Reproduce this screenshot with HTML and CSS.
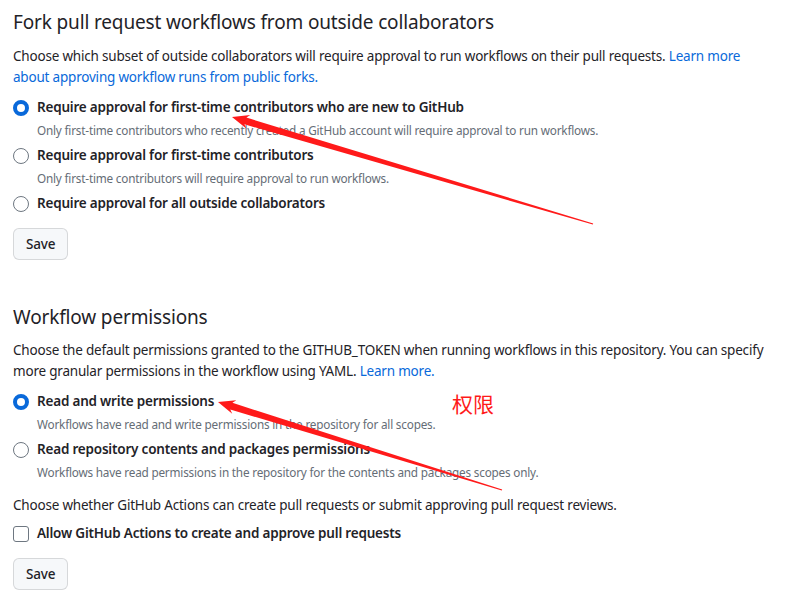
FILE: index.html
```html
<!DOCTYPE html>
<html lang="en">
<head>
<meta charset="utf-8">
<title>Actions settings</title>
<link rel="stylesheet" href="styles.css">
</head>
<body>
<main class="page">
  <section class="section">
    <h2 class="section-title">Fork pull request workflows from outside collaborators</h2>
    <p class="lead">Choose which subset of outside collaborators will require approval to run workflows on their pull requests. <a class="link" href="#">Learn more about approving workflow runs from public forks.</a></p>
    <div class="options">
      <label class="option">
        <span class="radio checked"></span>
        <span class="option-body">
          <span class="option-label">Require approval for first-time contributors who are new to GitHub</span>
          <span class="option-note">Only first-time contributors who recently created a GitHub account will require approval to run workflows.</span>
        </span>
      </label>
      <label class="option">
        <span class="radio"></span>
        <span class="option-body">
          <span class="option-label">Require approval for first-time contributors</span>
          <span class="option-note">Only first-time contributors will require approval to run workflows.</span>
        </span>
      </label>
      <label class="option">
        <span class="radio"></span>
        <span class="option-body">
          <span class="option-label">Require approval for all outside collaborators</span>
        </span>
      </label>
    </div>
    <button class="btn" type="button">Save</button>
  </section>

  <section class="section second">
    <h2 class="section-title">Workflow permissions</h2>
    <p class="lead">Choose the default permissions granted to the GITHUB_TOKEN when running workflows in this repository. You can specify more granular permissions in the workflow using YAML. <a class="link" href="#">Learn more.</a></p>
    <div class="options">
      <label class="option">
        <span class="radio checked"></span>
        <span class="option-body">
          <span class="option-label">Read and write permissions</span>
          <span class="option-note">Workflows have read and write permissions in the repository for all scopes.</span>
        </span>
      </label>
      <label class="option">
        <span class="radio"></span>
        <span class="option-body">
          <span class="option-label">Read repository contents and packages permissions</span>
          <span class="option-note">Workflows have read permissions in the repository for the contents and packages scopes only.</span>
        </span>
      </label>
    </div>
    <p class="lead plain">Choose whether GitHub Actions can create pull requests or submit approving pull request reviews.</p>
    <label class="option check-option">
      <span class="checkbox"></span>
      <span class="option-label">Allow GitHub Actions to create and approve pull requests</span>
    </label>
    <button class="btn" type="button">Save</button>
  </section>
</main>

<svg class="annotations" width="788" height="595" viewBox="0 0 788 595" aria-hidden="true">
  <polygon fill="#ff1a1a" points="232,117 250.3,115.1 246.4,117.6 593.2,223.4 592.8,224.6 244.4,124.3 246.3,128.5"/>
  <polygon fill="#ff1a1a" points="218,402 236.3,400.3 232.4,402.8 502.2,489.4 501.8,490.6 230.3,409.5 232.2,413.7"/>
</svg>
<span class="note-zh">权限</span>
</body>
</html>
```
FILE: styles.css
```css
html, body {
  margin: 0;
  padding: 0;
  background: #ffffff;
}

body {
  font-family: "Noto Sans", "Liberation Sans", sans-serif;
  color: #1f2328;
  font-size: 13.5px;
  letter-spacing: -0.2px;
  line-height: 21px;
}

.page {
  width: 762px;
  padding: 7px 13px 0;
}

.section-title {
  margin: 0;
  font-size: 19px;
  letter-spacing: -0.15px;
  line-height: 30px;
  font-weight: 400;
  color: #1f2328;
}

.second {
  margin-top: 42px;
}

.lead {
  margin: 9px 0 0;
}

.second .lead {
  margin-top: 8px;
}

.second .lead.plain {
  margin-top: 14px;
}

.link {
  color: #0969da;
  text-decoration: none;
}

.options {
  display: flex;
  flex-direction: column;
  gap: 6px;
  margin-top: 9px;
}

.option {
  display: flex;
  align-items: flex-start;
  gap: 8px;
}

.option-body {
  display: flex;
  flex-direction: column;
}

.option-label {
  font-weight: 600;
  line-height: 21px;
}

.option-note {
  margin-top: 3px;
  font-size: 11.75px;
  line-height: 18px;
  color: #656d76;
}

.radio {
  flex: none;
  box-sizing: border-box;
  width: 16px;
  height: 16px;
  margin-top: 2.5px;
  border: 1px solid #6e7781;
  border-radius: 50%;
  background: #ffffff;
}

.radio.checked {
  border: 4.5px solid #0969da;
}

.check-option {
  margin-top: 7px;
}

.checkbox {
  flex: none;
  box-sizing: border-box;
  width: 16px;
  height: 16px;
  margin-top: 2.5px;
  border: 1px solid #6e7781;
  border-radius: 3px;
  background: #ffffff;
}

.btn {
  display: block;
  margin-top: 14px;
  height: 32px;
  padding: 0 12px;
  font-family: inherit;
  font-size: 13.5px;
  letter-spacing: -0.2px;
  font-weight: 500;
  color: #1f2328;
  background: #f6f8fa;
  border: 1px solid rgba(31, 35, 40, 0.15);
  border-radius: 6px;
}

.second .btn {
  margin-top: 14px;
}

.annotations {
  position: absolute;
  left: 0;
  top: 0;
  pointer-events: none;
}

.note-zh {
  position: absolute;
  left: 452px;
  top: 389px;
  font-family: "Noto Sans CJK SC", sans-serif;
  font-size: 21px;
  line-height: 28px;
  letter-spacing: 0;
  color: #ff1a1a;
}
```
